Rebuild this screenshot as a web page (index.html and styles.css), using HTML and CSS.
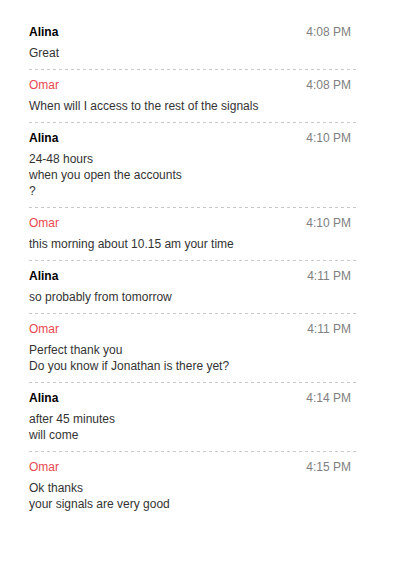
FILE: index.html
```html
<!DOCTYPE html>
<html>
<head>
<meta charset="utf-8">
<link rel="stylesheet" href="styles.css">
</head>
<body>
<div class="chat">
  <div class="msg">
    <div class="head"><span class="name agent">Alina</span><span class="time">4:08 PM</span></div>
    <div class="text">Great</div>
  </div>
  <div class="msg">
    <div class="head"><span class="name client">Omar</span><span class="time">4:08 PM</span></div>
    <div class="text">When will I access to the rest of the signals</div>
  </div>
  <div class="msg">
    <div class="head"><span class="name agent">Alina</span><span class="time">4:10 PM</span></div>
    <div class="text">24-48 hours<br>when you open the accounts<br>?</div>
  </div>
  <div class="msg">
    <div class="head"><span class="name client">Omar</span><span class="time">4:10 PM</span></div>
    <div class="text">this morning about 10.15 am your time</div>
  </div>
  <div class="msg">
    <div class="head"><span class="name agent">Alina</span><span class="time">4:11 PM</span></div>
    <div class="text">so probably from tomorrow</div>
  </div>
  <div class="msg">
    <div class="head"><span class="name client">Omar</span><span class="time">4:11 PM</span></div>
    <div class="text">Perfect thank you<br>Do you know if Jonathan is there yet?</div>
  </div>
  <div class="msg">
    <div class="head"><span class="name agent">Alina</span><span class="time">4:14 PM</span></div>
    <div class="text">after 45 minutes<br>will come</div>
  </div>
  <div class="msg">
    <div class="head"><span class="name client">Omar</span><span class="time">4:15 PM</span></div>
    <div class="text">Ok thanks<br>your signals are very good</div>
  </div>
</div>
</body>
</html>
```

FILE: styles.css
```css
html, body {
  margin: 0;
  padding: 0;
  background: #fff;
}
body {
  font-family: "Liberation Sans", Arial, sans-serif;
  font-size: 12px;
  line-height: 16px;
  color: #333;
}
.chat {
  width: 328px;
  margin: 17px 0 0 29px;
  display: flex;
  flex-direction: column;
}
.msg {
  padding: 7px 0 9px;
  background-image: linear-gradient(to right, #c8c8c8 50%, transparent 50%);
  background-size: 6px 1px;
  background-repeat: repeat-x;
  background-position: left bottom;
  display: flex;
  flex-direction: column;
  gap: 5px;
}
.msg:last-child {
  background-image: none;
}
.head {
  display: flex;
  justify-content: space-between;
  padding-right: 6px;
}
.name.agent {
  color: #000;
  font-weight: bold;
}
.name.client {
  color: #e8474f;
}
.time {
  color: #808080;
}
.text {
  color: #333;
}
```
